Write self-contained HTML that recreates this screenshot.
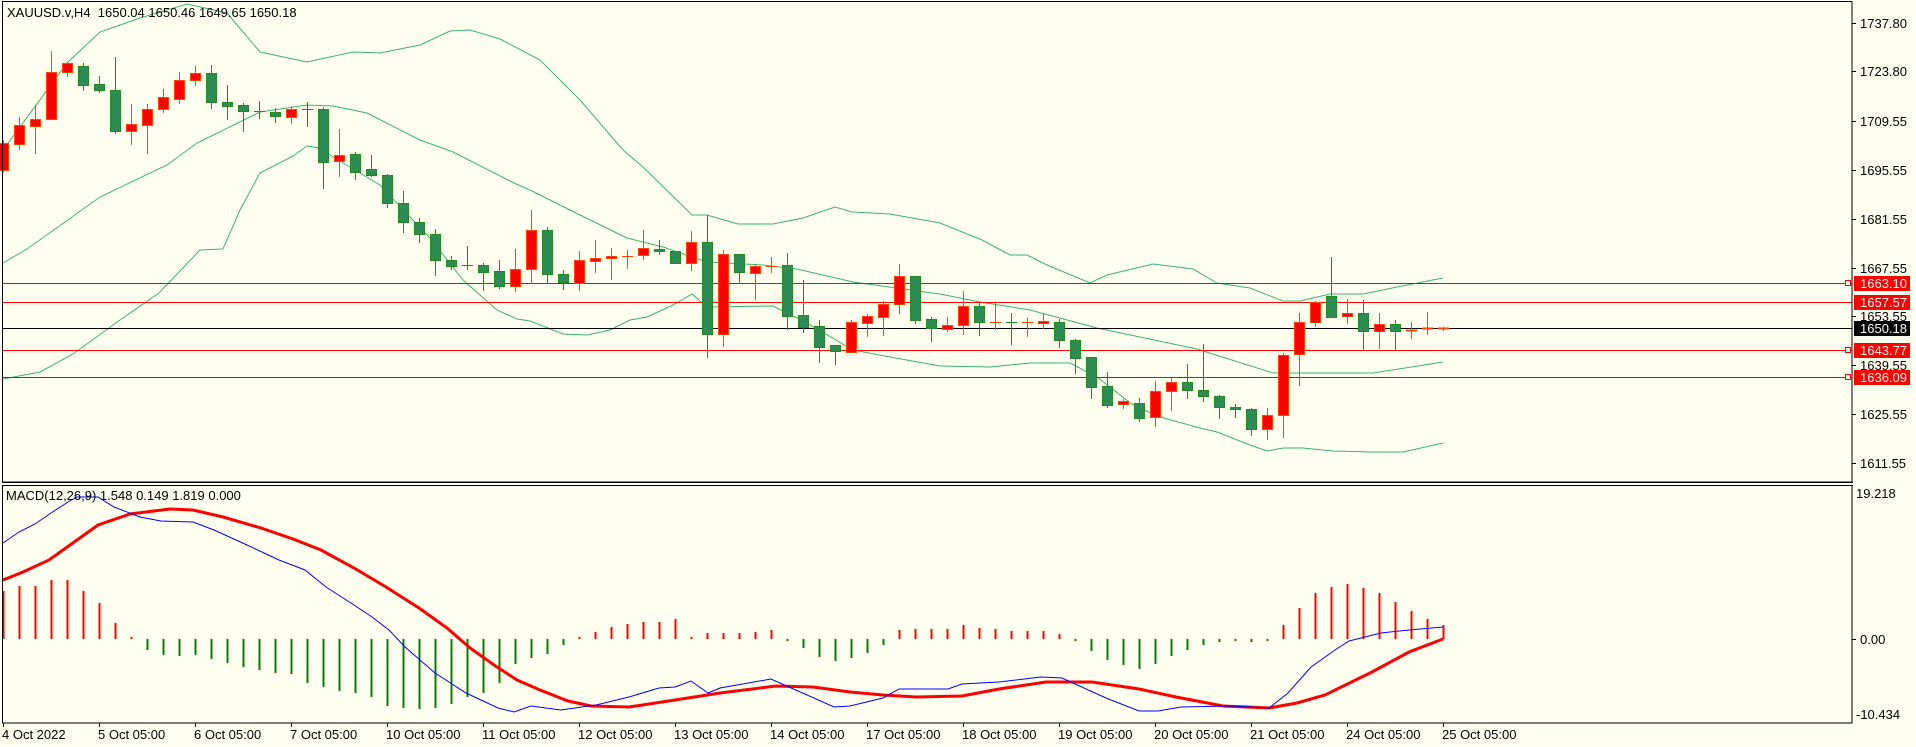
<!DOCTYPE html>
<html><head><meta charset="utf-8">
<style>
html,body{margin:0;padding:0;background:#FFFFF0;}
body{width:1916px;height:747px;overflow:hidden;position:relative;font-family:"Liberation Sans","DejaVu Sans",sans-serif;}
svg{position:absolute;left:0;top:0;}
svg text{font-family:"Liberation Sans","DejaVu Sans",sans-serif;font-size:13px;fill:#000;}
</style></head>
<body>
<svg id="c" width="1916" height="747" xmlns="http://www.w3.org/2000/svg" shape-rendering="crispEdges">
<rect x="0" y="0" width="1916" height="747" fill="#FFFFF0"/>
<g id="bands" fill="none" stroke="#3CB371" stroke-width="1" shape-rendering="auto"></g>
<g id="hlines"></g>
<g id="candles"></g>
<g id="macd"></g>
<rect x="2.5" y="1.5" width="1849.5" height="480.5" fill="none" stroke="#000" stroke-width="1"/>
<rect x="2.5" y="485.5" width="1849.5" height="237.5" fill="none" stroke="#000" stroke-width="1"/>
<line x1="2" y1="482.5" x2="1853" y2="482.5" stroke="#000"/>
<line x1="2" y1="485.5" x2="1853" y2="485.5" stroke="#000"/>
<g id="ticks" stroke="#000"></g>
<text x="1860" y="28">1737.80</text>
<text x="1860" y="76">1723.80</text>
<text x="1860" y="126">1709.55</text>
<text x="1860" y="175">1695.55</text>
<text x="1860" y="224">1681.55</text>
<text x="1860" y="273">1667.55</text>
<text x="1860" y="321">1653.55</text>
<text x="1860" y="370">1639.55</text>
<text x="1860" y="419">1625.55</text>
<text x="1860" y="468">1611.55</text>
<rect x="1854" y="276" width="56" height="15" fill="#FF0000"/>
<text x="1860" y="288" style="fill:#fff">1663.10</text>
<rect x="1854" y="295" width="56" height="15" fill="#FF0000"/>
<text x="1860" y="307" style="fill:#fff">1657.57</text>
<rect x="1854" y="321" width="56" height="15" fill="#000"/>
<text x="1860" y="333" style="fill:#fff">1650.18</text>
<rect x="1854" y="343" width="56" height="15" fill="#FF0000"/>
<text x="1860" y="355" style="fill:#fff">1643.77</text>
<rect x="1854" y="370" width="56" height="15" fill="#FF0000"/>
<text x="1860" y="382" style="fill:#fff">1636.09</text>
<text x="1856" y="498">19.218</text>
<text x="1860" y="644">0.00</text>
<text x="1856" y="719">-10.434</text>
<text x="7" y="17">XAUUSD.v,H4&#160; 1650.04 1650.46 1649.65 1650.18</text>
<text x="6" y="500">MACD(12,26,9) 1.548 0.149 1.819 0.000</text>
<text x="2" y="739">4 Oct 2022</text>
<text x="98" y="739">5 Oct 05:00</text>
<text x="194" y="739">6 Oct 05:00</text>
<text x="290" y="739">7 Oct 05:00</text>
<text x="386" y="739">10 Oct 05:00</text>
<text x="482" y="739">11 Oct 05:00</text>
<text x="578" y="739">12 Oct 05:00</text>
<text x="674" y="739">13 Oct 05:00</text>
<text x="770" y="739">14 Oct 05:00</text>
<text x="866" y="739">17 Oct 05:00</text>
<text x="962" y="739">18 Oct 05:00</text>
<text x="1058" y="739">19 Oct 05:00</text>
<text x="1154" y="739">20 Oct 05:00</text>
<text x="1250" y="739">21 Oct 05:00</text>
<text x="1346" y="739">24 Oct 05:00</text>
<text x="1442" y="739">25 Oct 05:00</text>
</svg>
<script>
var NS="http://www.w3.org/2000/svg";
function el(p,t,a){var e=document.createElementNS(NS,t);for(var k in a)e.setAttribute(k,a[k]);p.appendChild(e);return e;}
function pts(a){return a.map(function(p){return p[0]+","+p[1];}).join(" ");}
var bands=document.getElementById("bands");
var upper=[[3,150],[67,63],[100,32],[140,18],[187,4],[227,13],[260,52],[307,62],[353,52],[380,53],[420,45],[450,31],[470,30],[500,39],[540,60],[580,100],[623,150],[643,167],[692,215],[707,215],[738,224],[773,224],[803,218],[835,207],[852,212],[890,214],[940,223],[982,240],[1010,255],[1027,255],[1047,265],[1090,283],[1107,275],[1153,264],[1193,269],[1217,283],[1250,288],[1283,301],[1300,301],[1330,294],[1363,294],[1397,287],[1443,278]];
var middle=[[3,263],[27,249],[100,197],[167,165],[197,143],[260,112],[307,105],[333,106],[367,113],[420,140],[453,152],[514,183],[530,190],[580,215],[627,238],[663,247],[707,262],[763,265],[797,269],[853,282],[940,294],[980,302],[1030,310],[1097,328],[1197,349],[1273,373],[1307,373],[1373,373],[1443,362]];
var lower=[[3,379],[40,372],[73,354],[120,320],[159,293],[200,250],[223,249],[240,210],[260,173],[293,156],[307,146],[320,148],[333,157],[380,185],[430,238],[463,280],[497,310],[517,319],[530,321],[563,334],[587,335],[610,330],[630,320],[647,317],[673,305],[692,294],[707,307],[773,306],[807,323],[853,350],[890,357],[940,366],[990,367],[1030,363],[1070,363],[1097,377],[1133,405],[1160,417],[1200,428],[1217,432],[1250,445],[1267,451],[1283,448],[1303,448],[1333,451],[1373,452],[1403,452],[1443,443]];
[upper,middle,lower].forEach(function(a){el(bands,"polyline",{points:pts(a)});});
var hl=document.getElementById("hlines");
[[283.5,"#FF0000",1],[302.5,"#FF0000",0],[328.5,"#000",0],[350.5,"#FF0000",1],[377.5,"#FF0000",1]].forEach(function(h){
 el(hl,"line",{x1:3,y1:h[0],x2:1852,y2:h[0],stroke:h[1],"stroke-width":1});
 if(h[2])el(hl,"rect",{x:1845.5,y:h[0]-3,width:5,height:5,fill:"#FFFFF0",stroke:"#FF0000"});
});
var C=[[143,170,140,171,'r'],[125,144,117,149,'r'],[119,126,105,153,'r'],[72,119,51,119,'r'],[63,72,62,76,'r'],[66,85,63,90,'g'],[84,90,76,92,'g'],[90,131,57,133,'g'],[124,131,104,144,'r'],[109,125,104,153,'r'],
[97,109,89,112,'r'],[80,99,72,103,'r'],[73,80,66,85,'r'],[73,102,65,108,'g'],[102,106,85,119,'g'],[105,111,103,131,'g'],[111,111,101,118,'g'],[112,116,108,122,'g'],[109,117,106,123,'r'],[109,109,102,126,'g'],
[109,162,107,188,'g'],[155,161,129,176,'r'],[154,172,152,179,'g'],[169,175,155,176,'g'],[175,203,174,207,'g'],[203,222,191,232,'g'],[222,234,218,242,'g'],[234,260,229,275,'g'],[260,266,256,269,'g'],[265,265,246,269,'g'],
[265,272,263,290,'g'],[271,286,260,288,'g'],[269,286,249,291,'r'],[230,269,210,283,'r'],[230,274,227,282,'g'],[274,282,270,289,'g'],[260,283,251,290,'r'],[258,261,240,272,'r'],[256,258,248,279,'r'],[256,256,250,268,'r'],
[248,255,230,259,'r'],[249,251,240,254,'g'],[251,263,251,263,'g'],[242,263,231,270,'r'],[242,334,215,357,'g'],[254,334,250,346,'r'],[254,272,254,283,'g'],[266,273,264,299,'r'],[266,266,257,272,'r'],[265,316,253,329,'g'],
[315,327,280,332,'g'],[326,347,320,362,'g'],[345,351,345,364,'g'],[322,352,320,352,'r'],[316,323,314,336,'r'],[304,317,301,335,'r'],[276,304,264,313,'r'],[276,320,276,323,'g'],[319,328,317,341,'g'],[325,329,317,331,'r'],
[306,325,291,334,'r'],[306,322,303,335,'g'],[322,322,303,329,'r'],[322,322,313,344,'g'],[322,322,318,336,'r'],[321,323,313,328,'r'],[322,340,319,347,'g'],[340,358,339,373,'g'],[357,387,357,398,'g'],[386,405,372,407,'g'],
[401,404,399,408,'r'],[403,418,398,421,'g'],[391,417,381,426,'r'],[382,391,378,410,'r'],[382,390,364,398,'g'],[390,396,344,401,'g'],[396,407,395,418,'g'],[407,409,404,417,'g'],[409,429,408,435,'g'],[415,429,408,439,'r'],
[355,415,353,437,'r'],[322,354,313,385,'r'],[302,322,301,326,'r'],[296,317,257,317,'g'],[313,316,299,323,'r'],[313,331,300,349,'g'],[324,331,313,348,'r'],[324,331,320,350,'g'],[330,331,322,338,'r'],[328,329,312,334,'r'],
[328,329,327,330,'r']];
var cg=document.getElementById("candles");
C.forEach(function(c,k){
 var cx=3+16*k, g=c[4]=='g';
 var wc=g?"#228B22":"#FF4500", fill=g?"#2E8B57":"#FF0000";
 el(cg,"line",{x1:cx+0.5,y1:c[2],x2:cx+0.5,y2:c[3]+1,stroke:wc,"stroke-width":1});
 var h=c[1]-c[0];
 if(h<2){el(cg,"line",{x1:cx-5,y1:c[0]+0.5,x2:cx+6,y2:c[0]+0.5,stroke:wc,"stroke-width":h<1?1:2});}
 else el(cg,"rect",{x:cx-4.5,y:c[0]+0.5,width:10,height:h,fill:fill,stroke:wc,"stroke-width":1});
});
var H=[591,586,586,580,580,591,603,623,638,650,655,656,655,659,663,667,670,673,674,683,687,691,693,697,706,708,709,708,704,697,693,683,664,658,654,645,637,632,627,624,622,622,619,637,633,633,633,632,630,640,648,657,661,658,653,645,630,629,629,629,625,628,629,631,631,631,634,641,651,660,665,669,664,656,650,645,642,639,642,640,625,608,593,587,584,588,593,602,611,619,625];
var M=document.getElementById("macd");
H.forEach(function(y,k){
 var cx=3+16*k; var up=y<639;
 var y1=up?y:639, y2=up?639:y; if(y2-y1<2){y1=up?637:639;y2=up?639:641;}
 el(M,"rect",{x:cx-0.5,y:y1,width:2,height:y2-y1,fill:up?"#FF0000":"#008000"});
});
var blue=[[3,543],[19,532],[35,524],[51,513],[68,502],[77,497],[98,497],[114,507],[140,517],[161,521],[193,522],[214,530],[247,545],[279,560],[305,570],[326,587],[354,605],[372,617],[389,630],[405,647],[435,673],[466,693],[498,708],[514,712],[531,706],[561,710],[596,705],[629,697],[659,688],[675,687],[691,681],[708,693],[720,688],[771,679],[834,707],[850,706],[883,698],[899,689],[948,689],[962,684],[999,682],[1041,677],[1062,678],[1106,698],[1139,711],[1158,711],[1181,707],[1232,706],[1269,708],[1288,693],[1311,667],[1335,650],[1349,641],[1381,633],[1409,630],[1443,627]];
var red=[[3,580],[23,572],[49,560],[70,545],[98,525],[130,514],[170,509],[193,510],[223,517],[261,528],[293,539],[321,550],[354,568],[386,587],[419,608],[447,628],[470,648],[494,665],[517,680],[540,690],[568,701],[591,706],[629,707],[675,700],[720,693],[776,686],[813,687],[850,692],[883,695],[916,697],[962,696],[999,689],[1046,682],[1092,682],[1139,689],[1176,697],[1223,706],[1269,708],[1297,703],[1325,695],[1372,672],[1409,652],[1443,639]];
el(M,"polyline",{points:pts(red),fill:"none",stroke:"#FF0000","stroke-width":3,"shape-rendering":"auto"});
el(M,"polyline",{points:pts(blue),fill:"none",stroke:"#0000FF","stroke-width":1,"shape-rendering":"auto"});
var T=document.getElementById("ticks");
[23,71,121,170,219,268,316,365,414,463,639].forEach(function(y){el(T,"line",{x1:1852,y1:y+0.5,x2:1856,y2:y+0.5});});
for(var k=0;k<=90;k+=6){var x=3+16*k+0.5;el(T,"line",{x1:x,y1:723,x2:x,y2:727});}
</script>
</body></html>
